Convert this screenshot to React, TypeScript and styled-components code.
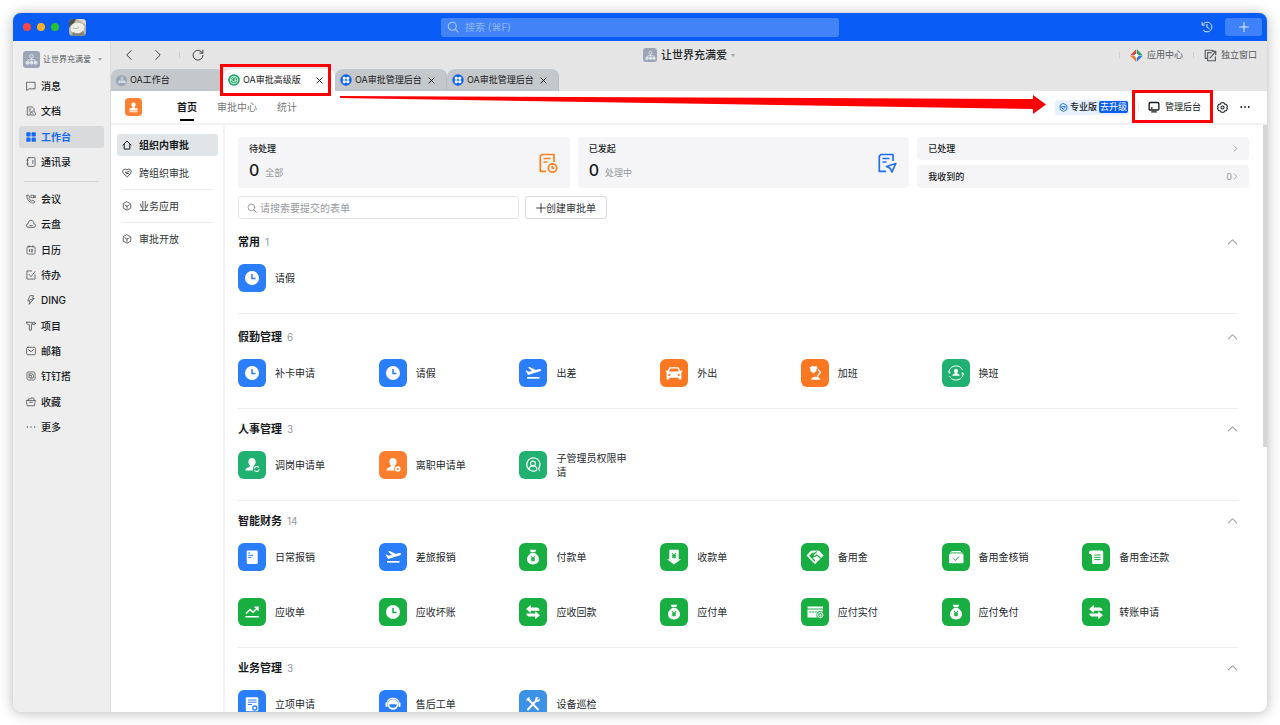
import React from 'react';
import styled, { createGlobalStyle, css } from 'styled-components';

const GlobalStyle = createGlobalStyle`
  *, *::before, *::after { box-sizing: border-box; }
  html, body, #root { height: 100%; }
  body {
    margin: 0;
    background: #fff;
    color: #171a1d;
    font-family: Inter, "Noto Sans CJK SC", sans-serif;
    font-size: 10px;
    line-height: 14px;
  }
  button, input { font: inherit; color: inherit; }
  button { border: 0; padding: 0; background: none; cursor: pointer; }
  a { color: inherit; text-decoration: none; }
  svg { display: block; flex: none; }
  ul, h1, h2, p { margin: 0; padding: 0; list-style: none; font-size: inherit; }
`;

/* ---------- window frame ---------- */

const Desktop = styled.div`
  height: 100vh;
  padding: 13px;
`;

const Window = styled.div`
  display: flex;
  flex-direction: column;
  height: 100%;
  border-radius: 8px;
  overflow: hidden;
  background: #fff;
  box-shadow: 0 0 0 1px #dcdcdc, 0 1px 14px rgba(0, 0, 0, 0.28);
`;

const TitleBar = styled.header`
  display: grid;
  grid-template-columns: 1fr 398px 1fr;
  align-items: center;
  flex: none;
  height: 28px;
  background: #095df6;
`;

const TitleLeft = styled.div`
  display: flex;
  align-items: center;
  gap: 6px;
  padding-left: 10px;
`;

const Light = styled.button<{ $color: string }>`
  width: 8px;
  height: 8px;
  border-radius: 50%;
  background: ${(p) => p.$color};
`;

const Avatar = styled.div`
  margin-left: 4px;
  border-radius: 4px;
  overflow: hidden;
`;

const GlobalSearch = styled.label`
  display: flex;
  align-items: center;
  gap: 6px;
  height: 19px;
  padding: 0 6px;
  border-radius: 3px;
  background: #4284f8;
  color: #a9c8fd;
  input {
    flex: 1;
    min-width: 0;
    border: 0;
    padding: 0;
    outline: 0;
    background: transparent;
  }
  input::placeholder { color: #8db5fb; opacity: 1; }
`;

const TitleRight = styled.div`
  display: flex;
  align-items: center;
  justify-content: flex-end;
  gap: 12px;
  padding-right: 5px;
  color: #dce9ff;
`;

const PlusButton = styled.button`
  display: grid;
  place-items: center;
  width: 37px;
  height: 18px;
  border-radius: 3px;
  background: #3e81f8;
  color: #dce9ff;
`;

const Body = styled.div`
  display: flex;
  flex: 1;
  min-height: 0;
`;

/* ---------- left sidebar ---------- */

const Sidebar = styled.aside`
  flex: none;
  width: 98px;
  padding: 0 6px;
  border-right: 1px solid #dadada;
  background: #eee;
`;

const OrgSwitch = styled.button`
  display: flex;
  align-items: center;
  gap: 3px;
  width: 100%;
  height: 34px;
  padding: 2px 2px 0 4px;
  color: #555a60;
  font-size: 8px;
`;

const OrgBadge = styled.i<{ $size: number; $round?: boolean }>`
  display: grid;
  place-items: center;
  flex: none;
  width: ${(p) => p.$size}px;
  height: ${(p) => p.$size}px;
  border-radius: ${(p) => (p.$round ? '50%' : '3px')};
  background: #9ba5b7;
  color: #fff;
`;

const Caret = styled.span<{ $end?: boolean }>`
  margin-left: ${(p) => (p.$end ? 'auto' : '0')};
  border: 2px solid transparent;
  border-top: 3px solid #a0a2a5;
  border-bottom: 0;
`;

const SideList = styled.ul<{ $height: number }>`
  display: flex;
  flex-direction: column;
  justify-content: space-between;
  min-height: ${(p) => p.$height}px;
`;

const SideLink = styled.a<{ $active?: boolean }>`
  display: flex;
  align-items: center;
  gap: 5px;
  height: 22px;
  padding: 0 7px;
  border-radius: 3px;
  font-weight: 500;
  svg { color: #4c5055; }
  ${(p) =>
    p.$active &&
    css`
      background: #d8dadc;
      color: #1269f5;
      font-weight: 700;
      svg { color: #1269f5; }
    `}
`;

const SideRule = styled.hr`
  height: 1px;
  margin: 8px 5px 6px;
  border: 0;
  background: #d6d6d6;
`;

/* ---------- toolbar and tabs ---------- */

const Workspace = styled.div`
  display: flex;
  flex-direction: column;
  flex: 1;
  min-width: 0;
`;

const Toolbar = styled.div`
  display: grid;
  grid-template-columns: 1fr auto 1fr;
  align-items: center;
  flex: none;
  height: 28px;
  background: #e5e5e5;
  color: #55585c;
`;

const NavButtons = styled.div`
  display: flex;
  align-items: center;
  padding-left: 12px;
  color: #3c3f43;
`;

const HistoryPair = styled.div`
  display: flex;
  gap: 17px;
  margin-right: 15px;
`;

const ReloadButton = styled.button`
  margin-left: 12px;
`;

const Tick = styled.span`
  flex: none;
  width: 1px;
  height: 6px;
  background: #cfcfcf;
`;

const OrgTitle = styled.button`
  display: flex;
  align-items: center;
  gap: 4px;
  color: #222528;
  font-size: 11px;
  font-weight: 500;
`;

const ToolbarRight = styled.div`
  display: flex;
  align-items: center;
  justify-content: flex-end;
  gap: 10px;
  padding-right: 10px;
  font-size: 9px;
`;

const ToolButton = styled.button`
  display: flex;
  align-items: center;
  gap: 4px;
`;

const TabStrip = styled.div`
  display: flex;
  flex: none;
  height: 22px;
  background: #e5e5e5;
`;

const Tab = styled.div<{ $active?: boolean }>`
  position: relative;
  display: flex;
  align-items: center;
  gap: 3px;
  width: 112px;
  padding: 0 11px 0 5px;
  border-radius: 8px 8px 0 0;
  border-right: 1px solid ${(p) => (p.$active ? '#fff' : '#b9bcbf')};
  background: ${(p) => (p.$active ? '#fff' : '#c5c8cb')};
  font-size: 9px;
`;

const TabLabel = styled.span`
  flex: 1;
  white-space: nowrap;
`;

const Highlight = styled.span<{ $inset: string }>`
  position: absolute;
  inset: ${(p) => p.$inset};
  z-index: 2;
  border: 3px solid #fe0000;
  pointer-events: none;
`;

const AppBar = styled.div`
  position: relative;
  display: flex;
  align-items: center;
  flex: none;
  height: 34px;
  padding: 0 17px 0 14px;
  border-bottom: 2px solid #f2f2f2;
`;

const AppLogo = styled.div`
  display: grid;
  place-items: center;
  width: 17px;
  height: 18px;
  margin-right: 35px;
  border-radius: 4px;
  background: #fd8033;
`;

const MainNav = styled.nav`
  display: flex;
  gap: 20px;
  flex: 1;
`;

const MainNavLink = styled.a<{ $active?: boolean }>`
  position: relative;
  color: ${(p) => (p.$active ? '#171a1d' : '#75777a')};
  font-weight: ${(p) => (p.$active ? 700 : 400)};
  ${(p) =>
    p.$active &&
    css`
      &::after {
        content: '';
        position: absolute;
        left: 3px;
        right: 3px;
        bottom: -7px;
        height: 2px;
        background: #000;
      }
    `}
`;

const PlanBadge = styled.div`
  display: flex;
  align-items: center;
  gap: 2px;
  height: 15px;
  padding: 0 1px 0 4px;
  border-radius: 3px;
  background: #e6f0ff;
  font-size: 9px;
  font-weight: 500;
`;

const UpgradeButton = styled.button`
  height: 12px;
  padding: 0 1px;
  border-radius: 2px;
  background: #0b5ff5;
  color: #fff;
  font-weight: 400;
  line-height: 12px;
`;

const AdminButton = styled.button`
  position: relative;
  display: flex;
  align-items: center;
  gap: 5px;
  margin: 0 16px 0 9px;
  font-size: 9px;
`;

const BarTick = styled(Tick)`
  margin-left: 9px;
  height: 8px;
  background: #e2e2e2;
`;

const MoreButton = styled.button`
  margin-left: 12px;
`;

const Arrow = styled.div`
  position: absolute;
  top: 4px;
  left: 229px;
  right: 221px;
  z-index: 2;
  display: flex;
  height: 20px;
  color: #fe0000;
  pointer-events: none;
  svg:first-child { flex: 1; min-width: 0; }
`;

/* ---------- approval app ---------- */

const AppBody = styled.div`
  display: flex;
  flex: 1;
  min-height: 0;
`;

const SubNav = styled.nav`
  flex: none;
  width: 114px;
  padding: 9px 5px 0 6px;
  border-right: 2px solid #f2f2f2;
`;

const SubLink = styled.a<{ $active?: boolean }>`
  display: flex;
  align-items: center;
  gap: 7px;
  height: 22px;
  padding: 0 5px;
  border-radius: 3px;
  color: ${(p) => (p.$active ? '#171a1d' : '#303438')};
  background: ${(p) => (p.$active ? '#e1e5e8' : 'transparent')};
  font-weight: ${(p) => (p.$active ? 700 : 400)};
  & + & { margin-top: 6px; }
`;

const SubRule = styled.hr`
  height: 1px;
  margin: 5px 5px;
  border: 0;
  background: #ebebeb;
`;

const Content = styled.main`
  position: relative;
  flex: 1;
  min-width: 0;
  padding: 12px 18px 0 13px;
  overflow: hidden;
`;

const ScrollThumb = styled.div`
  position: absolute;
  top: 0;
  right: 0;
  width: 4px;
  height: 322px;
  background: #d6d6d6;
`;

const Summary = styled.div`
  display: grid;
  grid-template-columns: repeat(3, 1fr);
  gap: 8px;
`;

const StatCard = styled.a`
  display: flex;
  align-items: center;
  justify-content: space-between;
  height: 51px;
  padding: 0 12px 0 11px;
  border-radius: 4px;
  background: #f5f5f7;
`;

const StatTitle = styled.p`
  margin-bottom: 4px;
  font-size: 9px;
  font-weight: 500;
`;

const StatValue = styled.p`
  display: flex;
  align-items: baseline;
  gap: 6px;
  color: #96989b;
  font-size: 9px;
  line-height: 20px;
  b {
    color: #171a1d;
    font-size: 16px;
    font-weight: 500;
  }
`;

const LinkStack = styled.div`
  display: grid;
  gap: 5px;
`;

const LinkRow = styled.a`
  display: flex;
  align-items: center;
  height: 23px;
  padding: 0 10px 0 11px;
  border-radius: 4px;
  background: #f5f5f7;
  font-size: 9px;
  font-weight: 500;
  span { flex: 1; }
  em { color: #96989b; font-style: normal; font-weight: 400; }
  svg { color: #96989b; }
`;

const Actions = styled.div`
  display: flex;
  gap: 6px;
  margin-top: 8px;
`;

const FormSearch = styled.label`
  display: flex;
  align-items: center;
  gap: 3px;
  width: 281px;
  height: 23px;
  padding: 0 8px;
  border: 1px solid #e4e5e6;
  border-radius: 3px;
  color: #8d8f92;
  input {
    flex: 1;
    min-width: 0;
    border: 0;
    padding: 0;
    outline: 0;
    background: transparent;
  }
  input::placeholder { color: #97999c; opacity: 1; }
`;

const CreateButton = styled.button`
  display: flex;
  align-items: center;
  justify-content: center;
  width: 82px;
  height: 23px;
  border: 1px solid #d8d9db;
  border-radius: 3px;
  color: #303336;
`;

const Section = styled.section<{ $first?: boolean; $roomy?: boolean }>`
  margin-right: 11px;
  padding: ${(p) => (p.$first || p.$roomy ? 14 : 11)}px 0 21px;
  border-top: ${(p) => (p.$first ? '0' : '1px solid #ececed')};
`;

const SectionHead = styled.div`
  display: flex;
  align-items: center;
  gap: 5px;
  height: 18px;
  margin-bottom: 13px;
  color: #96989b;
  h2 {
    color: #171a1d;
    font-size: 11px;
    font-weight: 700;
  }
  button { margin-left: auto; }
`;

const Grid = styled.ul`
  display: grid;
  grid-template-columns: repeat(7, 1fr);
  row-gap: 27px;
  padding-right: 15px;
`;

const FormLink = styled.a`
  display: flex;
  align-items: center;
  gap: 9px;
  height: 28px;
  padding-right: 28px;
  color: #24282c;
`;

const Tile = styled.span<{ $color: string }>`
  flex: none;
  border-radius: 6px;
  background: ${(p) => p.$color};
  color: #fff;
`;

/* ---------- icons ---------- */

const Line = ({ size = 10, box = 16, w = 1.3, children }: { size?: number; box?: number; w?: number; children: React.ReactNode }) => (
  <svg width={size} height={size} viewBox={`0 0 ${box} ${box}`} fill="none" stroke="currentColor" strokeWidth={w} strokeLinecap="round" strokeLinejoin="round" aria-hidden="true">
    {children}
  </svg>
);

const OrgGlyph = ({ size }: { size: number }) => (
  <svg width={size} height={size} viewBox="0 0 16 16" fill="none" stroke="#e3e7ee" strokeWidth="1.2" aria-hidden="true">
    <circle cx="8" cy="4" r="2.2" />
    <path d="M8 6.200v3M3 10c0-1.200 1.600-1.800 5-1.800s5 .6 5 1.800" />
    <circle cx="3" cy="12" r="1.900" fill="#dfe4ec" />
    <circle cx="8" cy="12" r="1.900" fill="#dfe4ec" />
    <circle cx="13" cy="12" r="1.900" fill="#dfe4ec" />
  </svg>
);

const SearchGlyph = ({ size }: { size: number }) => (
  <Line size={size} w={1.4}><circle cx="7" cy="7" r="5.300" /><path d="M11 11l3.700 3.700" /></Line>
);
const Close = () => <Line size={7} w={2.2}><path d="M2 2l12 12M14 2L2 14" /></Line>;
const Chevron = () => <Line size={7} w={2}><path d="M5 2l6 6-6 6" /></Line>;
const Cube = () => (
  <Line w={1.2}><path d="M8 1.300l6 3.300v6.800l-6 3.300-6-3.300V4.600z" /><path d="M4.500 6.200L8 8.300l3.500-2.100M8 8.300v3.700" /></Line>
);

const sideIcons: Record<string, React.ReactNode> = {
  消息: <Line><path d="M1.500 2h13v10.500H5L1.500 15z" /></Line>,
  文档: <Line><path d="M6 14.500H2V1.500h8l3 3V7M5 5h3M5 8h2" /><path d="M9 14.500a2.500 2.500 0 010-5 3 3 0 015.500 1.500 1.800 1.800 0 01-.5 3.500zM9 9.500l2 2.500" /></Line>,
  工作台: (
    <svg width="10" height="10" viewBox="0 0 16 16" fill="currentColor" aria-hidden="true">
      <rect x="0.500" y="0.500" width="6.800" height="6.800" rx="1.500" /><rect x="8.900" y="0.500" width="6.800" height="6.800" rx="1.500" />
      <rect x="0.500" y="8.900" width="6.800" height="6.800" rx="1.500" /><rect x="8.900" y="8.900" width="6.800" height="6.800" rx="1.500" />
    </svg>
  ),
  通讯录: <Line><rect x="2.500" y="1" width="12" height="14" rx="2" /><path d="M1 5h2.500M1 11h2.500M11 5.500v5" /></Line>,
  会议: <Line w={1.2}><path d="M1.500 2.500l2-1.200 2.300 3.400-1.300 2c.8 2 2.500 3.700 4.700 4.700l2-1.300 3 2.200-1.200 2C7.500 15.500.5 9.500 1.500 2.500z" /><path d="M8.500 2h4v4h-4zM12.500 3.500l2.500-1v3.500l-2.500-1" /></Line>,
  云盘: <Line><path d="M4 13.500a3 3 0 01-.5-6C3.500 4 5.500 2 8 2s4.500 2 4.500 5.500a3 3 0 01-.5 6z" /><path d="M6 10.500h4" /></Line>,
  日历: <Line w={1.2}><rect x="1.500" y="2.500" width="13" height="12" rx="2" /><path d="M5 1v2.500M11 1v2.500M5.500 7v4M8.500 7h2v2h-2v2h2.200" /></Line>,
  待办: <Line><path d="M14.500 8v6.500h-13v-13H9" /><path d="M5 7l3 3.500 6.500-8" /></Line>,
  DING: <Line><path d="M7 1h5l-1.500 4.500H13L5 15l1.500-5.500H3.500z" /><path d="M10 7H7" /></Line>,
  项目: <Line><path d="M1 2h9v3.500H8.700V14.500H5.300V6C3 6 1 5 1 2z" /><circle cx="13" cy="4" r="2" /></Line>,
  邮箱: <Line><rect x="1" y="2" width="14" height="12" rx="2" /><path d="M4 6l4 3 4-3" /></Line>,
  钉钉搭: <Line w={1.2}><path d="M4 1.500h8l2.500 2v9l-2.500 2H4l-2.500-2v-9z" /><path d="M5 4.500h4a3 3 0 013 3l-.5 4H8M5 4.500v2.500M8.500 7L5 7.500 4.500 11h3z" /></Line>,
  收藏: <Line><path d="M1 5.500h14L13.500 14h-11z" /><path d="M3 5.500l1-2.500h3l1-1.500h4l1.500 4M5.500 8.500h5" /></Line>,
  更多: <Line w={2.2}><path d="M2 8h.01M8 8h.01M14 8h.01" /></Line>,
};

const Bust = () => <path d="M14 7c2.200 0 3.600 1.600 3.600 3.800 0 1.700-.7 2.900-1.500 3.500-.2 1.200.5 1.600 1.900 2.100 1.600.5 2.500 1.100 2.500 3.100h-13c0-2 .9-2.600 2.500-3.100 1.400-.5 2.100-.9 1.900-2.100-.8-.6-1.500-1.800-1.500-3.500C10.400 8.600 11.800 7 14 7z" />;
const Yen = ({ x, y, s = 1, c }: { x: number; y: number; s?: number; c: string }) => (
  <path transform={`translate(${x} ${y}) scale(${s})`} d="M-2-2.500L0 0l2-2.500M0 0v3M-2 .2h4M-2 1.600h4" stroke={c} strokeWidth="1.1" fill="none" />
);

const GREEN = '#19ae42';
const TEAL = '#20b170';
const BLUE = '#2a7dfb';
const ORANGE = '#fc7722';

const tileIcons: Record<string, React.ReactNode> = {
  clock: <><circle cx="14" cy="14" r="7" /><path d="M14 10v4.500h3.500" stroke="var(--tile)" strokeWidth="1.500" fill="none" /></>,
  plane: <><path d="M6.500 11.800l1.200-.4 2 1.400 3.200-.9-3.900-3.300 1.700-.6 6.200 2.900 3.200-.9c.9-.3 1.800 0 2 .7.200.6-.3 1.200-1.100 1.500L9.200 15.900z" /><path d="M8 18h12.500v1.700H8z" /></>,
  car: <path fillRule="evenodd" d="M9.500 8.200h9l1.900 3.600 1.800-.4v1.500l-.8.400v7.200h-2.700v-1.700H9.300v1.700H6.600v-7.200l-.8-.4v-1.500l1.800.4zM10.400 9.500L9.100 12.600h9.800l-1.300-3.100zM9.300 14.800a1.100 1.100 0 100 2.200 1.100 1.100 0 000-2.200zM18.700 14.800a1.100 1.100 0 100 2.200 1.100 1.100 0 000-2.200z" />,
  lamp: <><path d="M8.500 8.500L12 6.800l1.200 1 2-1 1.500 2.400-1.500 1.200.5 1.500-3.700 2.600-1.200-1-1.500-1.300.3-1.200z" /><path d="M9 11.500l3 3" stroke="var(--tile)" strokeWidth=".7" /><path d="M17 10.500l2.500 2.900-3.300 4.300" stroke="#fff" strokeWidth="1.200" fill="none" /><path d="M10 20.700c.6-2 2.300-3 4.700-3s4.100 1 4.900 3z" /></>,
  swap: <><g transform="translate(6.300 6) scale(.55)"><Bust /></g><path d="M7 12.500a7.200 7.200 0 0113.500-1.500M21 15.500a7.200 7.200 0 01-13.500 1.500" stroke="#fff" strokeWidth="1" fill="none" /><path d="M6 12l1 3 1.800-2zM22 16l-1-3-1.800 2z" /></>,
  personSync: <><Bust /><circle cx="18.700" cy="18" r="3.800" fill="var(--tile)" /><path d="M16.200 17.500a2.600 2.600 0 014.700-.8M21.200 18.500a2.600 2.600 0 01-4.700.8" stroke="#fff" strokeWidth="1.1" fill="none" /></>,
  personOut: <><Bust /><circle cx="18.800" cy="18" r="3.600" fill="var(--tile)" /><circle cx="18.800" cy="18" r="2.800" /><path d="M17.800 17l2 2M19.800 17l-2 2" stroke="var(--tile)" strokeWidth=".9" /></>,
  personRing: <g fill="none" stroke="#fff" strokeWidth="1.1"><path d="M18 19a6.600 6.600 0 111.600-1.500l1.200 2.800" /><circle cx="14" cy="12.500" r="2.400" /><path d="M10 18.500c.2-2.300 1.800-3.600 4-3.600s3.800 1.300 4 3.600" /></g>,
  doc: <><rect x="8.700" y="7.500" width="11" height="13.500" rx="1" /><path d="M10.200 10h2M10.200 12.300h5M10.200 14.500h3" stroke="var(--tile)" strokeWidth="1" /></>,
  bag: <><path d="M10.700 6.700h6.600l-1.200 2.600h-4.200z" /><path d="M12 10h4c2.600 1.800 4 3.800 4 6.300 0 3-2.300 5.200-6 5.200s-6-2.200-6-5.200c0-2.500 1.400-4.500 4-6.300z" /><Yen x={14} y={15.500} c="var(--tile)" /></>,
  receive: <><path d="M9.300 6.700h9.400v9.600h2.300L14 21.500l-7-5.200h2.300z" /><Yen x={14} y={12.500} c="var(--tile)" /></>,
  hands: <><path d="M10 8h8l4 4.500-8 8.300-8-8.300z" strokeLinejoin="round" stroke="#fff" strokeWidth=".8" /><path d="M15.800 8.600l-3.300 2.600-.6 2.500 2-.2 1.800-1.400 4 3.200M8.500 12.300l5.500 5.700" stroke="var(--tile)" strokeWidth="1.200" fill="none" /><path d="M11 9.700l-2.300 2.800 2.800 2.500 1.300-1-.9-2.200 1.500-2.100z" fill="var(--tile)" /></>,
  wallet: <><path d="M9.500 8h9.500v1H9.500z" /><path d="M8 9.400h12.500v1.400H8z" opacity=".8" /><rect x="7" y="11" width="14.500" height="9.300" rx="1" /><path d="M11.300 15.500l2 2 3.700-4" stroke="var(--tile)" strokeWidth="1" fill="none" /></>,
  scroll: <><path d="M7 9.700a2 2 0 014-.5v3H9V11H7z" /><path d="M10 7.500h9.700A1.500 1.500 0 0121.200 9v10.500a1.500 1.500 0 01-1.500 1.500h-8.200a1.500 1.500 0 01-1.500-1.500z" /><path d="M12.200 12h6.500M12.200 14.300h6.500M12.200 16.600h6.500" stroke="var(--tile)" strokeWidth="1" /></>,
  trend: <><path d="M8 15.500l4-4 3 2.800 4.500-4.500M16.500 9.300H20v3.500" stroke="#fff" strokeWidth="1.500" fill="none" /><path d="M7.300 18h13.500v1.500H7.300z" /></>,
  exchange: <path d="M7 11l4.800-4v2.600h5.700c1.700 0 2.900.9 3.100 3.100H11.800V15zM21 17.200l-4.800 4v-2.600h-5.700c-1.700 0-2.900-.9-3.100-3.100h8.800v-2.300z" />,
  card: <><path d="M6.500 8.500h15.500v2H6.500zM6.500 11.500h15.500v8H6.500z" /><path d="M8.300 14h2M11 14h2M13.700 14h2" stroke="var(--tile)" strokeWidth="1" /><circle cx="19.300" cy="17" r="3.900" fill="var(--tile)" /><circle cx="19.300" cy="17" r="2.700" fill="none" stroke="#fff" strokeWidth="1" /><Yen x={19.300} y={16.800} s={0.6} c="#fff" /></>,
  proposal: <><rect x="7.800" y="7.200" width="12.500" height="14" rx="1" /><path d="M10 10h8.500M10 12.200h8.500M10 14.500h4" stroke="var(--tile)" strokeWidth="1" /><circle cx="16.800" cy="18" r="2" fill="#fff" stroke="var(--tile)" strokeWidth="1.300" /></>,
  service: <><path d="M7.800 13.500a6.300 6.300 0 0112.400 0" fill="none" stroke="#fff" strokeWidth="1.200" /><rect x="6.500" y="12.500" width="2" height="4.500" rx="1" /><rect x="19.500" y="12.500" width="2" height="4.500" rx="1" /><circle cx="14" cy="14.500" r="5.200" /><path d="M10.300 14.300h7.400a3.700 3.500 0 01-7.400 0z" fill="var(--tile)" /></>,
  tools: <><path d="M9 9l10 10.500M19 8.500L9 19.500" stroke="#fff" strokeWidth="2" strokeLinecap="round" /><path d="M7.500 10.500l3-3" stroke="#fff" strokeWidth="1.500" /><circle cx="18.500" cy="9.500" r="2.400" /><path d="M18.500 9.500l2.500-2.500" stroke="var(--tile)" strokeWidth="1.500" /></>,
};

/* ---------- data ---------- */

const sideTop = ['消息', '文档', '工作台', '通讯录'];
const sideBottom = ['会议', '云盘', '日历', '待办', 'DING', '项目', '邮箱', '钉钉搭', '收藏', '更多'];

type Form = [name: string, icon: string, color: string];
const sections: { title: string; count: number; forms: Form[] }[] = [
  { title: '常用', count: 1, forms: [['请假', 'clock', BLUE]] },
  {
    title: '假勤管理',
    count: 6,
    forms: [
      ['补卡申请', 'clock', BLUE], ['请假', 'clock', BLUE], ['出差', 'plane', BLUE],
      ['外出', 'car', ORANGE], ['加班', 'lamp', ORANGE], ['换班', 'swap', TEAL],
    ],
  },
  {
    title: '人事管理',
    count: 3,
    forms: [['调岗申请单', 'personSync', TEAL], ['离职申请单', 'personOut', '#fd7e2f'], ['子管理员权限申请', 'personRing', TEAL]],
  },
  {
    title: '智能财务',
    count: 14,
    forms: [
      ['日常报销', 'doc', BLUE], ['差旅报销', 'plane', BLUE], ['付款单', 'bag', GREEN], ['收款单', 'receive', GREEN],
      ['备用金', 'hands', GREEN], ['备用金核销', 'wallet', GREEN], ['备用金还款', 'scroll', GREEN],
      ['应收单', 'trend', GREEN], ['应收坏账', 'clock', GREEN], ['应收回款', 'exchange', GREEN], ['应付单', 'bag', GREEN],
      ['应付实付', 'card', GREEN], ['应付免付', 'bag', GREEN], ['转账申请', 'exchange', GREEN],
    ],
  },
  {
    title: '业务管理',
    count: 3,
    forms: [['立项申请', 'proposal', BLUE], ['售后工单', 'service', BLUE], ['设备巡检', 'tools', '#3b92e6']],
  },
];

const FormIcon = ({ icon, color }: { icon: string; color: string }) => (
  <Tile $color={color}>
    <svg width="28" height="28" viewBox="0 0 28 28" fill="#fff" style={{ '--tile': color } as React.CSSProperties} aria-hidden="true">
      {tileIcons[icon]}
    </svg>
  </Tile>
);

const SideGroup = ({ names, height }: { names: string[]; height: number }) => (
  <SideList $height={height}>
    {names.map((name) => (
      <li key={name}>
        <SideLink href="#" $active={name === '工作台'}>{sideIcons[name]}{name}</SideLink>
      </li>
    ))}
  </SideList>
);

const ManageTabIcon = () => (
  <svg width="12" height="12" viewBox="0 0 12 12" aria-hidden="true">
    <circle cx="6" cy="6" r="5.700" fill="#0b62f6" />
    <g fill="#fff"><rect x="2.700" y="2.700" width="3" height="3" rx="1" /><rect x="6.300" y="2.700" width="3" height="3" rx="1" /><rect x="2.700" y="6.300" width="3" height="3" rx="1" /><rect x="6.300" y="6.300" width="3" height="3" rx="1" /></g>
  </svg>
);

export default function App() {
  return (
    <Desktop>
      <GlobalStyle />
      <Window>
        <TitleBar>
          <TitleLeft>
            <Light $color="#fc4748" aria-label="关闭" />
            <Light $color="#fdb024" aria-label="最小化" />
            <Light $color="#27c232" aria-label="最大化" />
            <Avatar>
              <svg width="17" height="17" viewBox="0 0 17 17" aria-hidden="true">
                <rect width="17" height="17" fill="#b9b8a8" />
                <path d="M0 0h7L5 4 2 6 0 9z" fill="#4b5148" />
                <path d="M8 0h9v6l-4-3z" fill="#d8d8d0" />
                <path d="M2 8c1-4 5-5 8-4 4 0 6 3 5 6-1 4-5 5-8 4-4 0-6-2-5-6z" fill="#eeeee6" />
                <path d="M4 13c3 2 7 2 10-1l2 5H2z" fill="#85877b" />
                <path d="M4 9c2 1 4 1 6-1" stroke="#b5b5a8" fill="none" />
              </svg>
            </Avatar>
          </TitleLeft>
          <GlobalSearch>
            <SearchGlyph size={12} />
            <input type="text" placeholder="搜索 (⌘F)" aria-label="搜索" />
          </GlobalSearch>
          <TitleRight>
            <button aria-label="历史记录">
              <Line size={12}><path d="M2.500 4.500A6.500 6.500 0 118 14.500c-2 0-3.800-.8-5-2.200M1.500 2v3.500H5M8 4.500V8.500l2.800 1.500" /></Line>
            </button>
            <PlusButton aria-label="新建"><Line size={10} w={1.700}><path d="M8 1v14M1 8h14" /></Line></PlusButton>
          </TitleRight>
        </TitleBar>

        <Body>
          <Sidebar>
            <OrgSwitch>
              <OrgBadge $size={17}><OrgGlyph size={13} /></OrgBadge>
              让世界充满爱
              <Caret $end />
            </OrgSwitch>
            <SideGroup names={sideTop} height={98} />
            <SideRule />
            <SideGroup names={sideBottom} height={250} />
          </Sidebar>

          <Workspace>
            <Toolbar>
              <NavButtons>
                <HistoryPair>
                  <button aria-label="后退"><Line size={12}><path d="M11 2L5 8l6 6" /></Line></button>
                  <button aria-label="前进"><Line size={12}><path d="M5 2l6 6-6 6" /></Line></button>
                </HistoryPair>
                <Tick />
                <ReloadButton aria-label="刷新"><Line size={12}><path d="M14 5.500A6.600 6.600 0 1014.600 8.500M14.500 1.500v4h-4" /></Line></ReloadButton>
              </NavButtons>
              <OrgTitle>
                <OrgBadge $size={14}><OrgGlyph size={11} /></OrgBadge>
                让世界充满爱
                <Caret />
              </OrgTitle>
              <ToolbarRight>
                <Tick />
                <ToolButton>
                  <svg width="13" height="13" viewBox="0 0 14 14" aria-hidden="true">
                    <path d="M6.600.3v4.200L4.500 6.600H.3z" fill="#d8443f" /><path d="M7.400.3v4.200L9.500 6.600h4.200z" fill="#27a163" />
                    <path d="M6.600 13.700V9.500L4.500 7.400H.3z" fill="#f0792b" /><path d="M7.400 13.700V9.500l2.100-2.100h4.200z" fill="#2a7be8" />
                    <path d="M7 4.500L9.500 7 7 9.500 4.500 7z" fill="#fff" />
                  </svg>
                  应用中心
                </ToolButton>
                <Tick />
                <ToolButton>
                  <Line size={13} w={1.400}><path d="M4 11.500H1.500v-10H11V3M9 4.500H4.500v10h9.500V9.500M7.500 11l6.500-7.500M10.500 3H14.500v4" /></Line>
                  独立窗口
                </ToolButton>
              </ToolbarRight>
            </Toolbar>

            <TabStrip>
              <Tab><OrgBadge $size={11} $round><OrgGlyph size={8} /></OrgBadge><TabLabel>OA工作台</TabLabel></Tab>
              <Tab $active>
                <svg width="12" height="12" viewBox="0 0 12 12" fill="none" stroke="#fff" aria-hidden="true">
                  <circle cx="6" cy="6" r="5.800" fill="#18a765" stroke="none" />
                  <circle cx="6" cy="6" r="3.800" strokeWidth=".8" /><path d="M8 4.800A2.200 2.200 0 108.200 6H6" strokeWidth=".9" />
                </svg>
                <TabLabel>OA审批高级版</TabLabel>
                <button aria-label="关闭标签"><Close /></button>
                <Highlight $inset="-5px 3px -5px -3px" />
              </Tab>
              <Tab><ManageTabIcon /><TabLabel>OA审批管理后台</TabLabel><button aria-label="关闭标签"><Close /></button></Tab>
              <Tab><ManageTabIcon /><TabLabel>OA审批管理后台</TabLabel><button aria-label="关闭标签"><Close /></button></Tab>
            </TabStrip>

            <AppBar>
              <AppLogo>
                <svg width="11" height="11" viewBox="0 0 11 11" fill="#fff" aria-hidden="true">
                  <circle cx="5.500" cy="2.800" r="2.200" /><path d="M4.500 4h2l.3 2.200H9.500V8.500h-8V6.200h2.700zM1.500 9.200h8v1.100h-8z" />
                </svg>
              </AppLogo>
              <MainNav>
                <MainNavLink href="#" $active>首页</MainNavLink>
                <MainNavLink href="#">审批中心</MainNavLink>
                <MainNavLink href="#">统计</MainNavLink>
              </MainNav>
              <PlanBadge>
                <Line size={9} w={1.600}><g stroke="#1269f5"><path d="M8 1l6 3.500v7L8 15l-6-3.500v-7z" /><path d="M4.500 6.500h7L8 11z" /></g></Line>
                专业版
                <UpgradeButton>去升级</UpgradeButton>
              </PlanBadge>
              <BarTick />
              <AdminButton>
                <Line size={12} w={1.800}><rect x="1.500" y="2" width="13" height="10" rx="1.500" /><path d="M5 14.500h6M4.500 9.300h1" /></Line>
                管理后台
                <Highlight $inset="-10px -12px -9px -16px" />
              </AdminButton>
              <button aria-label="设置">
                <Line size={11} w={1.500}><path d="M6 1.200h4l1.200 2.200h2.300l1.700 3-1 1.600 1 1.600-1.700 3h-2.300L10 14.800H6l-1.200-2.200H2.500l-1.700-3 1-1.600-1-1.600 1.700-3h2.300z" /><circle cx="8" cy="8" r="2.300" /></Line>
              </button>
              <MoreButton aria-label="更多">
                <Line size={10} w={2.900}><path d="M2 8h.01M8 8h.01M14 8h.01" /></Line>
              </MoreButton>
              <Arrow aria-hidden="true">
                <svg height="20" viewBox="0 0 693 20" preserveAspectRatio="none" fill="currentColor"><path d="M0 1l693 3v10L0 3z" /></svg>
                <svg width="13" height="20" viewBox="0 0 13 20" fill="currentColor"><path d="M0 0l13 9.500L0 19z" /></svg>
              </Arrow>
            </AppBar>

            <AppBody>
              <SubNav>
                <SubLink href="#" $active><Line w={1.600}><path d="M1.500 8L8 1.500 14.500 8M3.500 7v7.500h9V7" /></Line>组织内审批</SubLink>
                <SubLink href="#"><Line><path d="M8 14L1.800 8A4 4 0 018 3a4 4 0 016.200 5z" /><path d="M11.500 5L8 7l-2.500-.5 2 3 2.500-1.500 1.500 2" /></Line>跨组织审批</SubLink>
                <SubRule />
                <SubLink href="#"><Cube />业务应用</SubLink>
                <SubRule />
                <SubLink href="#"><Cube />审批开放</SubLink>
              </SubNav>

              <Content>
                <Summary>
                  <StatCard href="#">
                    <div>
                      <StatTitle>待处理</StatTitle>
                      <StatValue><b>0</b>全部</StatValue>
                    </div>
                    <svg width="20" height="20" viewBox="0 0 20 20" fill="none" stroke="#f9801d" strokeWidth="1.700" strokeLinejoin="round" aria-hidden="true">
                      <path d="M16 9V1.500H4L2.300 3.200v15.100H8M5.500 5.500h7M5.500 9h4" /><circle cx="14.500" cy="15" r="4.200" /><path d="M14.300 12.800v2.400h2" />
                    </svg>
                  </StatCard>
                  <StatCard href="#">
                    <div>
                      <StatTitle>已发起</StatTitle>
                      <StatValue><b>0</b>处理中</StatValue>
                    </div>
                    <svg width="20" height="20" viewBox="0 0 20 20" fill="none" stroke="#1e6ef5" strokeWidth="1.700" strokeLinejoin="round" aria-hidden="true">
                      <path d="M16 8V1.500H4L2.300 3.200v15.100H9M5.500 5.500h7M5.500 9h4" /><path d="M18.800 10.500L9.500 13.500l3.700 1.800 1.800 3.700z" />
                    </svg>
                  </StatCard>
                  <LinkStack>
                    <LinkRow href="#"><span>已处理</span><Chevron /></LinkRow>
                    <LinkRow href="#"><span>我收到的</span><em>0</em><Chevron /></LinkRow>
                  </LinkStack>
                </Summary>

                <Actions>
                  <FormSearch>
                    <SearchGlyph size={10} />
                    <input type="text" placeholder="请搜索要提交的表单" aria-label="搜索表单" />
                  </FormSearch>
                  <CreateButton>
                    <Line size={10} w={1.500}><path d="M8 1v14M1 8h14" /></Line>创建审批单
                  </CreateButton>
                </Actions>

                {sections.map((s, i) => (
                  <Section key={s.title} $first={i === 0} $roomy={i === 1}>
                    <SectionHead>
                      <h2>{s.title}</h2>
                      {s.count}
                      <button aria-label={`收起${s.title}`}><Line size={11} w={1.500}><path d="M2 10l6-6 6 6" /></Line></button>
                    </SectionHead>
                    <Grid>
                      {s.forms.map(([name, icon, color]) => (
                        <li key={name}><FormLink href="#"><FormIcon icon={icon} color={color} />{name}</FormLink></li>
                      ))}
                    </Grid>
                  </Section>
                ))}
                <ScrollThumb />
              </Content>
            </AppBody>
          </Workspace>
        </Body>
      </Window>
    </Desktop>
  );
}
